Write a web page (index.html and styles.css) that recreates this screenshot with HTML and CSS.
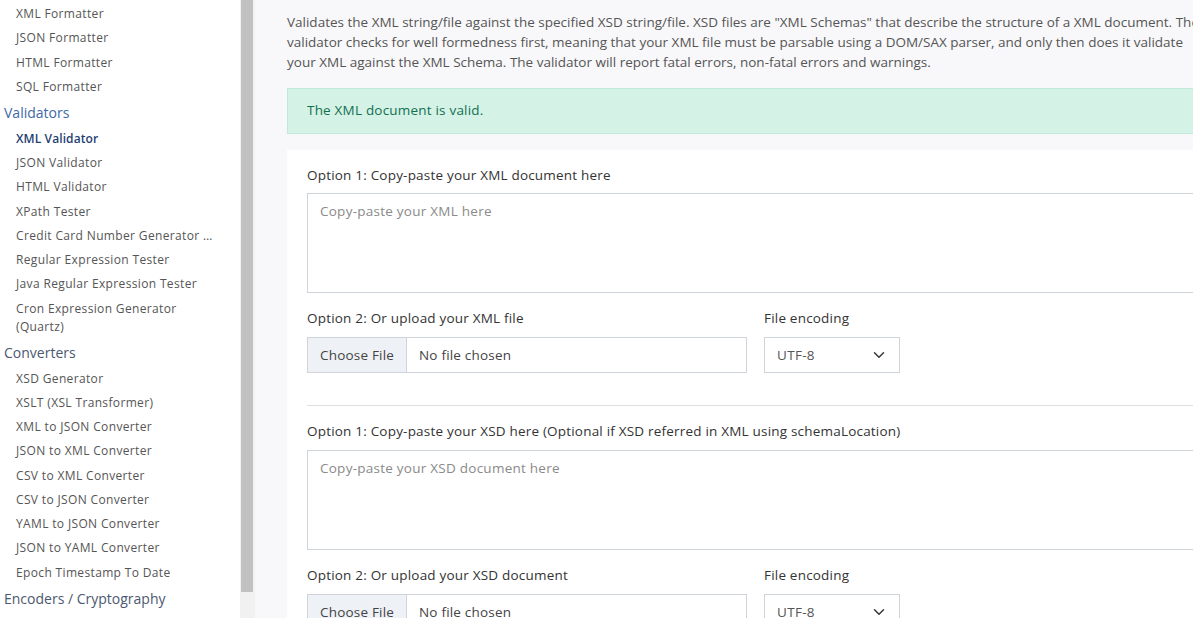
FILE: index.html
```html
<!DOCTYPE html>
<html lang="en">
<head>
<meta charset="utf-8">
<title>XML Validator</title>
<link rel="stylesheet" href="styles.css">
</head>
<body>
<div class="layout">
  <nav class="sidebar">
    <ul class="menu">
      <li class="item">XML Formatter</li>
      <li class="item">JSON Formatter</li>
      <li class="item">HTML Formatter</li>
      <li class="item">SQL Formatter</li>
      <li class="heading open">Validators</li>
      <li class="item active">XML Validator</li>
      <li class="item">JSON Validator</li>
      <li class="item">HTML Validator</li>
      <li class="item">XPath Tester</li>
      <li class="item trunc">Credit Card Number Generator &amp; Validator</li>
      <li class="item">Regular Expression Tester</li>
      <li class="item">Java Regular Expression Tester</li>
      <li class="item">Cron Expression Generator (Quartz)</li>
      <li class="heading">Converters</li>
      <li class="item">XSD Generator</li>
      <li class="item">XSLT (XSL Transformer)</li>
      <li class="item">XML to JSON Converter</li>
      <li class="item">JSON to XML Converter</li>
      <li class="item">CSV to XML Converter</li>
      <li class="item">CSV to JSON Converter</li>
      <li class="item">YAML to JSON Converter</li>
      <li class="item">JSON to YAML Converter</li>
      <li class="item">Epoch Timestamp To Date</li>
      <li class="heading">Encoders / Cryptography</li>
    </ul>
  </nav>
  <div class="scrollbar"><div class="thumb"></div></div>
  <main class="main">
    <div class="container">
      <p class="intro">Validates the XML string/file against the specified XSD string/file. XSD files are "XML Schemas" that describe the structure of a XML document. The<br>validator checks for well formedness first, meaning that your XML file must be parsable using a DOM/SAX parser, and only then does it validate<br>your XML against the XML Schema. The validator will report fatal errors, non-fatal errors and warnings.</p>
      <div class="alert">The XML document is valid.</div>
      <section class="card">
        <label class="label first">Option 1: Copy-paste your XML document here</label>
        <textarea class="textarea" placeholder="Copy-paste your XML here"></textarea>
        <div class="row">
          <div class="col-file">
            <label class="label">Option 2: Or upload your XML file</label>
            <div class="file">
              <span class="file-btn">Choose File</span>
              <span class="file-name">No file chosen</span>
            </div>
          </div>
          <div class="col-enc">
            <label class="label">File encoding</label>
            <div class="select">
              <span>UTF-8</span>
              <svg class="chev" width="12" height="12" viewBox="0 0 16 16"><path d="M2 5l6 6 6-6" fill="none" stroke="#343a40" stroke-width="2" stroke-linecap="round" stroke-linejoin="round"/></svg>
            </div>
          </div>
        </div>
        <hr class="divider">
        <label class="label">Option 1: Copy-paste your XSD here (Optional if XSD referred in XML using schemaLocation)</label>
        <textarea class="textarea" placeholder="Copy-paste your XSD document here"></textarea>
        <div class="row">
          <div class="col-file">
            <label class="label">Option 2: Or upload your XSD document</label>
            <div class="file">
              <span class="file-btn">Choose File</span>
              <span class="file-name">No file chosen</span>
            </div>
          </div>
          <div class="col-enc">
            <label class="label">File encoding</label>
            <div class="select">
              <span>UTF-8</span>
              <svg class="chev" width="12" height="12" viewBox="0 0 16 16"><path d="M2 5l6 6 6-6" fill="none" stroke="#343a40" stroke-width="2" stroke-linecap="round" stroke-linejoin="round"/></svg>
            </div>
          </div>
        </div>
      </section>
    </div>
  </main>
</div>
</body>
</html>
```
FILE: styles.css
```css
* { box-sizing: border-box; }
html, body { margin: 0; padding: 0; height: 100%; overflow: hidden; }
body {
  font-family: "Open Sans", "Noto Sans", sans-serif;
  font-size: 13.5px;
  color: #555;
  background: #f8f8fa;
}
.layout { display: flex; height: 618px; }

.sidebar { width: 240px; flex: none; background: #fff; overflow: hidden; }
.menu { list-style: none; margin: 0; padding: 2px 0 0 0; }
.item {
  font-size: 12px;
  line-height: 18px;
  letter-spacing: 0.35px;
  padding: 3.15px 24px 3.15px 16px;
  color: #555;
}
.item.active { color: #1f3f73; font-weight: 600; letter-spacing: 0.1px; }
.item.trunc { white-space: nowrap; overflow: hidden; text-overflow: ellipsis; padding-right: 26px; }
.heading {
  font-size: 14px;
  line-height: 21px;
  padding: 3.25px 4px;
  color: #4b5870;
}
.heading.open { color: #4169a8; }

.scrollbar { width: 15px; flex: none; background: #f1f1f1; padding: 0 2px 0 1px; }
.thumb { height: 592px; background: #c1c1c1; }

.main { flex: 1; min-width: 0; overflow: hidden; padding: 12px 0 0 32px; }
.container { width: 960px; }
.intro { margin: 0 0 16px; line-height: 20px; white-space: nowrap; color: #555; }

.alert {
  background: #d5f2e7;
  border: 1px solid #bfe9da;
  color: #11704f;
  padding: 12px 19px;
  line-height: 19.5px;
  letter-spacing: 0.2px;
  margin-bottom: 16px;
}

.card { background: #fff; padding: 15px 20px 20px; }
.label { display: block; color: #333; font-weight: 500; line-height: 20px; letter-spacing: 0.2px; margin-bottom: 9px; }
.label.first { margin-bottom: 8px; }
.textarea {
  display: block;
  width: 100%;
  height: 100px;
  border: 1px solid #ced4da;
  border-radius: 0;
  padding: 8px 12px;
  font: inherit;
  letter-spacing: 0.25px;
  line-height: 19.5px;
  color: #555;
  resize: none;
  margin: 0 0 15px;
}
.textarea::placeholder { color: #8a8a8a; }

.row { display: flex; gap: 17px; }
.col-file { width: 440px; }
.col-enc { width: 136px; }
.file { display: flex; height: 36px; border: 1px solid #ced4da; letter-spacing: 0.2px; }
.file-btn { background: #eef1f6; border-right: 1px solid #ced4da; padding: 0 12px; line-height: 34px; color: #444; width: 99px; white-space: nowrap; }
.file-name { padding: 0 12px; line-height: 34px; color: #444; }
.select { display: flex; align-items: center; justify-content: space-between; height: 36px; border: 1px solid #ced4da; padding: 0 14px 0 12px; color: #555; letter-spacing: 0.3px; }
.chev { display: block; }

.divider { border: 0; border-top: 1px solid #ddd; margin: 32px 0 15px; }
```
